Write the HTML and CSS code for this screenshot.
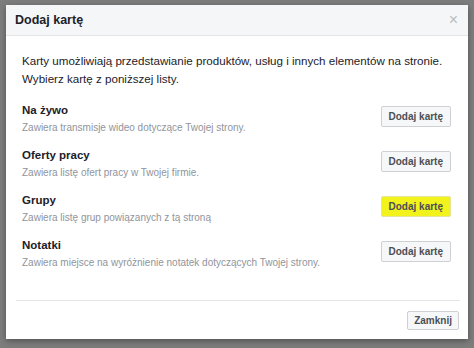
FILE: index.html
```html
<!DOCTYPE html>
<html lang="pl">
<head>
    <meta charset="UTF-8">
    <meta name="viewport" content="width=device-width, initial-scale=1.0">
    <title>Dodaj kartę</title>
    <link rel="stylesheet" href="styles.css">
</head>
<body>
    <div class="dialog">
        <div class="dialog-header">
            <h1>Dodaj kartę</h1>
            <span class="close">&times;</span>
        </div>

        <div class="dialog-body">
            <p class="intro">Karty umożliwiają przedstawianie produktów, usług i innych elementów na stronie. Wybierz kartę z poniższej listy.</p>

            <div class="tab-row">
                <div class="tab-info">
                    <h2>Na żywo</h2>
                    <p>Zawiera transmisje wideo dotyczące Twojej strony.</p>
                </div>
                <button class="btn">Dodaj kartę</button>
            </div>

            <div class="tab-row">
                <div class="tab-info">
                    <h2>Oferty pracy</h2>
                    <p>Zawiera listę ofert pracy w Twojej firmie.</p>
                </div>
                <button class="btn">Dodaj kartę</button>
            </div>

            <div class="tab-row">
                <div class="tab-info">
                    <h2>Grupy</h2>
                    <p>Zawiera listę grup powiązanych z tą stroną</p>
                </div>
                <button class="btn highlight">Dodaj kartę</button>
            </div>

            <div class="tab-row">
                <div class="tab-info">
                    <h2>Notatki</h2>
                    <p>Zawiera miejsce na wyróżnienie notatek dotyczących Twojej strony.</p>
                </div>
                <button class="btn">Dodaj kartę</button>
            </div>
        </div>

        <div class="dialog-footer">
            <button class="btn">Zamknij</button>
        </div>
    </div>
</body>
</html>
```

FILE: styles.css
```css
body {
    margin: 0;
    height: 348px;
    background: #7d7d7d;
    font-family: "Liberation Sans", Arial, sans-serif;
    color: #1d2129;
    padding: 5px 6px 0 6px;
    box-sizing: border-box;
}

.dialog {
    width: 462px;
    height: 334px;
    background: white;
    box-shadow: 0 2px 6px rgba(0,0,0,0.35);
    display: flex;
    flex-direction: column;
}

.dialog-header {
    height: 30px;
    background: #f5f6f7;
    border-bottom: 1px solid #e5e5e5;
    display: flex;
    align-items: center;
    justify-content: space-between;
    padding: 0 10px 0 9px;
}

.dialog-header h1 {
    margin: 0;
    font-size: 12.5px;
    font-weight: bold;
}

.close {
    color: #b9bcc1;
    font-size: 16px;
    line-height: 1;
}

.dialog-body {
    padding: 16px 16px 0 16px;
    flex: 1;
}

.intro {
    margin: 0 0 8px 0;
    font-size: 11.6px;
    line-height: 18px;
}

.tab-row {
    display: flex;
    justify-content: space-between;
    align-items: center;
    height: 45px;
}

.tab-info h2 {
    margin: 0;
    font-size: 11.5px;
    font-weight: bold;
    line-height: 16px;
}

.tab-info p {
    margin: 3px 0 0 0;
    font-size: 10px;
    color: #90949c;
    line-height: 14px;
}

.btn {
    font-family: inherit;
    font-size: 10px;
    font-weight: bold;
    color: #4b4f56;
    background: #f6f7f9;
    border: 1px solid #ced0d4;
    border-radius: 2px;
    height: 21px;
    padding: 0 7px;
    margin: -4px 1px 0 0;
}

.highlight {
    background: #f2f21c;
    border-color: #e4e49a;
}

.dialog-footer {
    margin: 0 8px 0 10px;
    border-top: 1px solid #e5e5e5;
    display: flex;
    justify-content: flex-end;
    padding: 10px 1px 9px 0;
}

.dialog-footer .btn {
    height: 19px;
    margin: 0;
    padding: 0 6px;
}
```
